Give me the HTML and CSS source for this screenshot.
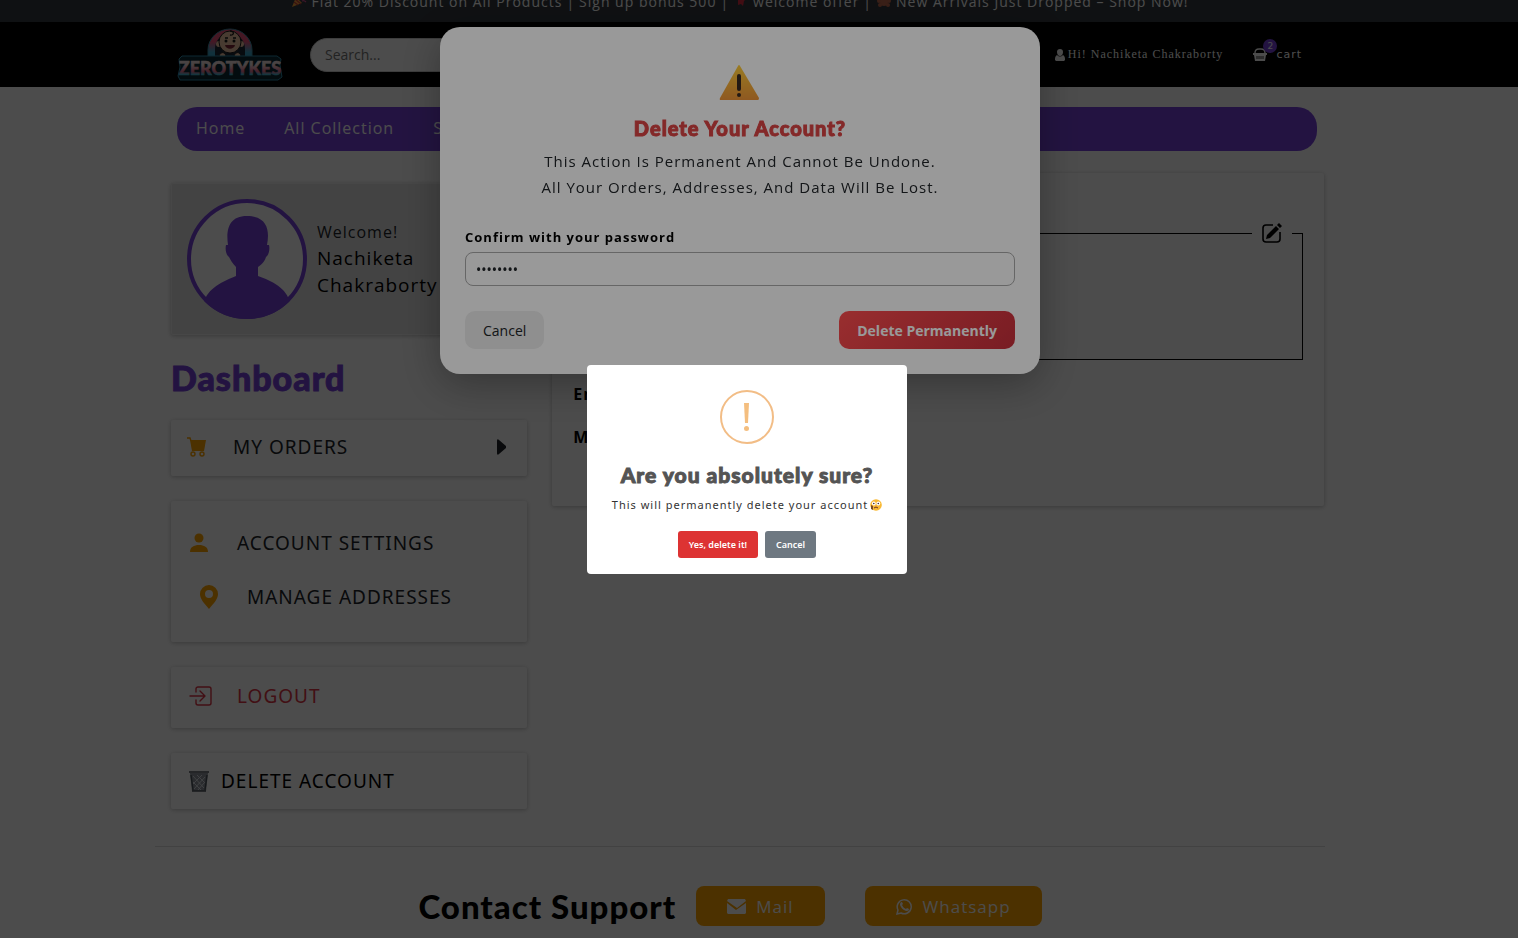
FILE: index.html
```html
<!DOCTYPE html>
<html lang="en">
<head>
  <meta charset="UTF-8">
  <meta name="viewport" content="width=device-width, initial-scale=1.0">
  <title>Zerotykes - My Account</title>
  <link rel="stylesheet" href="styles.css">
</head>
<body>

  <!-- Offer strip -->
  <div class="offer-bar">
    <svg class="emoji" viewBox="0 0 16 16"><path d="M1 15 5 5l6 6z" fill="#f5a33b"/><path d="M3 10l4 3M4 7l6 5" stroke="#c4413a" stroke-width="1.4"/><path d="M7 5c1-2 0-3-1-4M10 7c1-3 3-3 5-3M11 9c2-1 3 0 4 1" stroke="#d34b8d" stroke-width="1.3" fill="none"/><circle cx="11" cy="2" r="1" fill="#4aa3df"/></svg>
    <span>Flat 20% Discount on All Products</span><span>|</span>
    <span>Sign up bonus 500</span><span>|</span>
    <svg class="emoji" viewBox="0 0 16 16"><path d="M8 0l2 5 4 1-3 3-1 5-2-2-3 1V8L2 6l4-1z" fill="#dd2e44"/></svg>
    <span>welcome offer</span><span>|</span>
    <svg class="emoji" viewBox="0 0 16 16"><g fill="#c1694f"><circle cx="4" cy="3" r="2"/><circle cx="12" cy="3" r="2"/><circle cx="8" cy="5" r="4"/><ellipse cx="8" cy="10" rx="4" ry="4"/><circle cx="3" cy="9" r="2"/><circle cx="13" cy="9" r="2"/><circle cx="4" cy="13" r="2"/><circle cx="12" cy="13" r="2"/></g><circle cx="8" cy="6" r="1.5" fill="#e8b88a"/></svg>
    <span>New Arrivals Just Dropped – Shop Now!</span>
  </div>

  <header class="site-header">
    <div class="header-inner">
      <a class="logo" href="#" aria-label="Zerotykes">
        <svg width="106" height="54" viewBox="0 0 106 54">
          <defs>
            <linearGradient id="arch" x1="0" y1="0" x2="0" y2="1">
              <stop offset="0.4" stop-color="#e8517a"/><stop offset="0.75" stop-color="#3aa6c9"/>
            </linearGradient>
            <linearGradient id="word" x1="0" y1="0" x2="0" y2="1">
              <stop offset="0.35" stop-color="#f6e3e0"/><stop offset="0.65" stop-color="#ea6f92"/><stop offset="0.8" stop-color="#45b4d0"/>
            </linearGradient>
          </defs>
          <path d="M31 32V22a22 21 0 0 1 44 0v10z" fill="url(#arch)" stroke="#3d8ca5" stroke-width="1"/>
          <path d="M38 32V21a15 16 0 0 1 30 0v11z" fill="#1a2733"/>
          <circle cx="42" cy="16" r="3" fill="#f3c6a5"/><circle cx="64" cy="16" r="3" fill="#f3c6a5"/>
          <circle cx="53" cy="14" r="11" fill="#f3c6a5" stroke="#1a1a1a"/>
          <path d="M53 3c5 0 4 5 0 4M48 10h3M56 10h3" stroke="#1a1a1a" stroke-width="1.3" fill="none"/>
          <circle cx="49" cy="13" r="1.5" fill="#1a1a1a"/><circle cx="57" cy="13" r="1.5" fill="#1a1a1a"/>
          <path d="M48 17h10c-1 5-9 5-10 0z" fill="#7d2434"/>
          <path d="M42 28c2-5 6-4 7 0M57 28c2-5 6-4 7 0" fill="#f3c6a5" stroke="#1a1a1a"/>
          <path d="M5 28h95l4 3-1 6 2 12-4 3H3l-2-4 2-9-1-8z" fill="#0c2833" stroke="#2d8aa8" stroke-width="1"/>
          <text class="logo-word" x="53" y="47" text-anchor="middle" fill="url(#word)" stroke="url(#word)" stroke-width="0.6">ZEROTYKES</text>
        </svg>
      </a>
      <input class="search" type="search" placeholder="Search..." aria-label="Search">
      <div class="header-links">
        <a class="user-link" href="#">
          <svg width="10" height="12" viewBox="0 0 10 12" fill="#fff"><path d="M5 0a3 3 0 0 1 3 3c0 2-1 4-3 4S2 5 2 3a3 3 0 0 1 3-3zM2 6c2 2 4 2 6 0 2 1 2 3 2 5l-1 1H1l-1-1c0-2 0-4 2-5z"/></svg>
          Hi! Nachiketa Chakraborty
        </a>
        <a class="cart-link" href="#">
          <svg width="14" height="13" viewBox="0 0 14 13"><path d="M2 5c0-3 2-4 4-4h2c2 0 4 1 4 4" fill="none" stroke="#fff" stroke-width="1.4"/><path d="M0 5h14v2h-1l-1 6H2L1 7H0z" fill="#fff"/><path d="M4 8v3M6 8v3M8 8v3M10 8v3" stroke="#000" stroke-width="0.8"/></svg>
          <span class="badge">2</span>
          cart
        </a>
      </div>
    </div>
  </header>

  <nav class="main-nav">
    <a href="#">Home</a>
    <a href="#">All Collection</a>
    <a href="#">Shop</a>
  </nav>

  <main class="account">
    <div class="account-grid">
      <aside class="sidebar">
        <div class="profile">
          <svg class="avatar" viewBox="0 0 120 120">
            <defs><clipPath id="round"><circle cx="60" cy="60" r="60"/></clipPath></defs>
            <circle cx="60" cy="60" r="58" fill="#fff" stroke="#7743db" stroke-width="4"/>
            <path clip-path="url(#round)" fill="#7743db" d="M17 104c3-15 20-22 32-27V68c-4-4-6-8-7-10-3-2-4-8-3-12h2c-2-14 0-29 19-29 20 0 23 14 20 29h2c1 4 0 10-3 12-1 3-3 7-8 10v9c14 5 29 12 32 27l-20 16H37z"/>
          </svg>
          <div class="profile-text">
            <span class="welcome">Welcome!</span>
            <span class="name">Nachiketa Chakraborty</span>
          </div>
        </div>

        <h1 class="dashboard-title">Dashboard</h1>

        <div class="panel">
          <a class="menu-link orders" href="#">
            <svg width="20" height="20" viewBox="0 0 20 20"><path d="M0 1h3l1 3" fill="none" stroke="#ffa500" stroke-width="1.4"/><path d="M3 3h16l-2 11H5z" fill="#ffa500"/><g fill="none" stroke="#ffa500" stroke-width="1.4"><circle cx="6" cy="17" r="2"/><circle cx="15" cy="17" r="2"/></g></svg>
            My Orders
            <svg class="arrow" width="10" height="16" viewBox="0 0 10 16"><path d="M0 2C0 0 1 0 2 1l7 6v2l-7 6c-1 1-2 1-2-1z" fill="#212529"/></svg>
          </a>
        </div>
        <div class="panel settings">
          <a class="menu-link" href="#">
            <svg width="20" height="20" viewBox="0 0 20 20" fill="#ffa500"><circle cx="10" cy="5" r="4.5"/><path d="M1 19c0-5 4-7 9-7s9 2 9 7z"/></svg>
            Account Settings
          </a>
          <a class="menu-link nested" href="#">
            <svg width="20" height="26" viewBox="0 0 20 26"><path fill="#ffa500" fill-rule="evenodd" d="M10 1a9 9 0 0 1 9 9c0 5-4 9-9 15C5 19 1 15 1 10a9 9 0 0 1 9-9zm0 5a4 4 0 1 0 0 8 4 4 0 0 0 0-8z"/></svg>
            Manage Addresses
          </a>
        </div>
        <div class="panel logout">
          <a class="menu-link" href="#">
            <svg width="24" height="20" viewBox="0 0 24 20" fill="none" stroke="#dc3545" stroke-width="1.4" stroke-linecap="round" stroke-linejoin="round"><path d="M7 6V3a2 2 0 0 1 2-2h11a2 2 0 0 1 2 2v14a2 2 0 0 1-2 2H9a2 2 0 0 1-2-2v-3M1 10h14M11 5l5 5-5 5"/></svg>
            Logout
          </a>
        </div>
        <div class="panel">
          <button class="menu-link delete" type="button">
            <svg width="20" height="21" viewBox="0 0 20 21"><path d="M1 2h18l-2 18H3z" fill="#8d939b"/><path d="M0 1h20M3 20h14M2 4l2 15M18 4l-2 15" stroke="#4c535b" stroke-width="1.4" fill="none"/><path d="M4 5l11 12M8 4l8 8M13 4l-9 9M16 6l-11 12M15 12l-6 7M4 11l8 8" stroke="#dfe3e8" stroke-width="0.9"/></svg>
            Delete Account
          </button>
        </div>
      </aside>

      <section class="details">
        <fieldset>
          <legend>
            <button type="button" aria-label="Edit">
              <svg width="20" height="20" viewBox="0 0 20 20"><path d="M11 2H4a3 3 0 0 0-3 3v11a3 3 0 0 0 3 3h11a3 3 0 0 0 3-3V9" fill="none" stroke="#000" stroke-width="1.6"/><path d="M4 16l1-4L14 3l3 3-9 9zM15 2l2-2 3 3-2 2z"/></svg>
            </button>
          </legend>
        </fieldset>
        <p>Email</p>
        <p>Mobile</p>
      </section>
    </div>

    <footer class="support">
      <h2>Contact Support</h2>
      <a class="support-btn" href="#">
        <svg width="19" height="15" viewBox="0 0 19 15"><path d="M1 0h17l1 2-9 7L0 2zM0 4l9 7 10-7v10l-1 1H1l-1-1z" fill="#fff"/></svg>
        Mail
      </a>
      <a class="support-btn" href="#">
        <svg width="17" height="17" viewBox="0 0 17 17"><path d="M1 16l1-4a7 7 0 1 1 3 3z" fill="none" stroke="#fff" stroke-width="1.5"/><path d="M6 4l1 2-1 1c1 2 2 3 4 4l1-1 2 1c0 2-2 2-3 2-3-1-5-3-6-6 0-1 0-3 2-3z" fill="#fff"/></svg>
        Whatsapp
      </a>
    </footer>
  </main>

  <!-- Delete account modal -->
  <div class="modal-overlay">
    <form class="modal" role="dialog" aria-labelledby="modal-title">
      <svg class="warning" width="42" height="38" viewBox="0 0 42 38">
        <defs><linearGradient id="warn" x1="0" y1="0" x2="0" y2="1"><stop offset="0" stop-color="#ffce3a"/><stop offset="1" stop-color="#ee9437"/></linearGradient></defs>
        <path d="M19 2q1-2 2 0l19 32q0 2-1 2H2q-2 0-1-2z" fill="url(#warn)"/>
        <rect x="18" y="10" width="4" height="17" rx="2" fill="#3a2a20"/><circle cx="20" cy="31" r="2" fill="#3a2a20"/>
      </svg>
      <h2 id="modal-title">Delete Your Account?</h2>
      <p>This Action Is Permanent And Cannot Be Undone.<br>All Your Orders, Addresses, And Data Will Be Lost.</p>
      <label for="password">Confirm with your password</label>
      <input type="password" id="password" value="password">
      <div class="modal-actions">
        <button class="cancel-btn" type="button">Cancel</button>
        <button class="delete-btn" type="button">Delete Permanently</button>
      </div>
    </form>
  </div>

  <!-- Final confirmation -->
  <div class="alert-overlay">
    <div class="alert" role="alertdialog" aria-labelledby="alert-title">
      <svg class="alert-icon" width="54" height="54" viewBox="0 0 54 54">
        <circle cx="27" cy="27" r="26" fill="none" stroke="#f2bd86" stroke-width="2"/>
        <path d="M24 13h5l-1 20h-3z" fill="#f4be7f"/><circle cx="26.5" cy="38.5" r="2.5" fill="#f4be7f"/>
      </svg>
      <h2 id="alert-title">Are you absolutely sure?</h2>
      <p>This will permanently delete your account
        <svg width="12" height="12" viewBox="0 0 12 12"><circle cx="6" cy="6" r="5.8" fill="#f9b934"/><circle cx="3.8" cy="4.5" r="1.9" fill="#fff"/><circle cx="8.3" cy="4.5" r="1.9" fill="#fff"/><circle cx="3.8" cy="4.5" r="0.8" fill="#402a32"/><circle cx="8.3" cy="4.5" r="0.8" fill="#402a32"/><path d="M4 9q2-2 4 0" stroke="#6b3020" fill="none"/><path d="M1 6l2 1v4L1 10z" fill="#7a4a22"/></svg>
      </p>
      <div class="alert-actions">
        <button class="confirm" type="button">Yes, delete it!</button>
        <button type="button">Cancel</button>
      </div>
    </div>
  </div>

</body>
</html>
```
FILE: styles.css
```css
* {
  box-sizing: border-box;
}

body {
  margin: 0;
  font-family: "Open Sans", "Noto Sans", sans-serif;
  font-size: 16px;
  letter-spacing: 1px;
  color: #212529;
  background: #fff;
  height: 100vh;
  overflow: hidden;
}

a {
  color: inherit;
  text-decoration: none;
}

svg {
  flex-shrink: 0;
}

h1, h2 {
  margin: 0;
  font-family: Lato, "Noto Sans", sans-serif;
  font-weight: 900;
}

button {
  font-family: inherit;
  border: none;
  cursor: pointer;
}

/* Offer strip */
.offer-bar {
  display: flex;
  justify-content: center;
  gap: 4px;
  height: 22px;
  padding-right: 38px;
  background: #343a40;
  color: #fff;
  font-size: 14px;
  line-height: 4px;
  white-space: nowrap;
}

.emoji {
  width: 16px;
  height: 16px;
  margin-top: -8px;
}

/* Header */
.site-header {
  background: #000;
  padding-right: 24px;
}

.header-inner {
  display: flex;
  align-items: center;
  max-width: 1140px;
  height: 65px;
  margin: 0 auto;
  padding-right: 15px;
}

.logo {
  display: flex;
  margin-right: 27px;
}

.logo-word {
  font: 900 18px Lato, sans-serif;
  letter-spacing: 0;
}

.search {
  width: 400px;
  height: 34px;
  padding: 0 14px;
  border: 1px solid #ccc;
  border-radius: 17px;
  background: #fff;
  font: 14px "Open Sans", sans-serif;
}

.header-links {
  display: flex;
  align-items: center;
  gap: 30px;
  margin-left: auto;
  color: #fff;
  font-size: 12px;
}

.user-link,
.cart-link {
  display: flex;
  align-items: center;
  gap: 3px;
}

.user-link {
  font-family: "Liberation Serif", serif;
}

.cart-link {
  position: relative;
  gap: 9px;
  font-family: "DejaVu Sans", sans-serif;
  font-size: 11px;
}

.badge {
  position: absolute;
  top: -9px;
  left: 10px;
  width: 14px;
  height: 14px;
  border-radius: 50%;
  background: #7743db;
  font-size: 9px;
  line-height: 14px;
  text-align: center;
  letter-spacing: 0;
}

.main-nav {
  display: flex;
  align-items: center;
  gap: 39px;
  height: 44px;
  width: calc(100% - 24px);
  max-width: 1140px;
  margin: 20px auto 0;
  padding: 0 19px 2px;
  border-radius: 20px;
  background: #7743db;
  color: #fff;
  position: relative;
  left: -12px;
}

/* Account page */
.account {
  padding-right: 38px;
}

.account-grid {
  display: grid;
  grid-template-columns: 6fr 13fr;
  align-items: start;
  gap: 25px;
  max-width: 1170px;
  margin: 0 auto;
  padding: 22px 1px 0 16px;
}

.sidebar {
  display: flex;
  flex-direction: column;
  gap: 25px;
  padding-top: 10px;
}

.profile,
.panel,
.details {
  border-radius: 2px;
  box-shadow: 0 1px 4px rgba(0, 0, 0, 0.25);
}

.profile {
  display: flex;
  align-items: center;
  gap: 10px;
  padding: 15px;
  border: 1px solid #eee;
  background: #e3e3e3;
}

.avatar {
  width: 120px;
  height: 120px;
}

.profile-text {
  line-height: 26px;
}

.welcome {
  display: block;
}

.name {
  font-size: 19px;
  color: #000;
}

.dashboard-title {
  font-size: 34px;
  line-height: 35px;
  color: #7743db;
  -webkit-text-stroke: 1px #7743db;
}

.menu-link {
  display: flex;
  align-items: center;
  width: 100%;
  height: 56px;
  padding: 0 18px;
  gap: 28px;
  background: none;
  font-family: "Noto Sans", sans-serif;
  font-size: 19px;
  letter-spacing: 1px;
  text-transform: uppercase;
  color: #212529;
}

.orders {
  padding: 0 20px 2px 16px;
  gap: 26px;
}

.arrow {
  margin-left: auto;
}

.settings {
  padding: 15px 0 18px;
}

.settings .menu-link {
  height: 54px;
}

.settings .nested {
  padding-left: 28px;
}

.logout {
  padding: 1px 0 4px;
}

.logout .menu-link {
  gap: 24px;
  color: #dc3545;
}

.delete {
  gap: 12px;
  color: #000;
}

.details {
  min-height: 333px;
  padding: 40px 21px 20px;
  color: #000;
  font-weight: bold;
}

.details fieldset {
  height: 147px;
  margin: 0 0 22px;
  padding: 0 10px;
  border: 1px solid #000;
}

.details legend {
  height: 40px;
  margin-left: auto;
  padding: 0;
}

.details legend button {
  display: grid;
  place-items: center;
  width: 40px;
  height: 40px;
  padding: 0;
  background: none;
}

.details p {
  margin: 0 0 19px;
  line-height: 24px;
}

.support {
  display: flex;
  align-items: center;
  justify-content: center;
  gap: 40px;
  max-width: 1170px;
  margin: 37px auto 0;
  padding: 39px 20px 20px 0;
  border-top: 1px solid #ddd;
}

.support h2 {
  margin-right: -20px;
  font-size: 33px;
  line-height: 38px;
  color: #000;
}

.support-btn {
  display: flex;
  align-items: center;
  gap: 10px;
  height: 40px;
  padding: 0 31px;
  border-radius: 8px;
  background: #ffa500;
  color: #fff;
  font-size: 17px;
}

/* Delete modal */
.modal-overlay,
.alert-overlay {
  position: fixed;
  inset: 0;
  display: flex;
  justify-content: center;
}

.modal-overlay {
  align-items: flex-start;
  padding: 27px 38px 0 0;
  background: rgba(0, 0, 0, 0.5);
}

.modal {
  display: flex;
  flex-direction: column;
  width: 600px;
  padding: 37px 25px 25px;
  border-radius: 20px;
  background: #fff;
  box-shadow: 0 10px 40px rgba(0, 0, 0, 0.3);
}

.warning {
  align-self: center;
}

.modal h2 {
  margin-top: 13px;
  font-size: 20px;
  line-height: 26px;
  text-align: center;
  color: #dc4545;
  -webkit-text-stroke: 1px #dc4545;
}

.modal p {
  margin: 7px 0 27px;
  font-size: 15px;
  line-height: 26px;
  text-align: center;
  color: #212529;
}

.modal label {
  margin-bottom: 5px;
  font-size: 13px;
  font-weight: bold;
  line-height: 20px;
  color: #000;
}

.modal input {
  height: 34px;
  padding: 0 10px;
  border: 1px solid #aaa;
  border-radius: 8px;
  font: 14px "Noto Sans", sans-serif;
  color: #212529;
}

.modal-actions {
  display: flex;
  justify-content: space-between;
  margin-top: 25px;
}

.modal-actions button {
  height: 38px;
  padding: 0 18px;
  border-radius: 10px;
  font-size: 14px;
}

.cancel-btn {
  background: #eee;
  color: #212529;
}

.modal-actions .delete-btn {
  background: linear-gradient(135deg, #ff4d4f, #c9303c);
  color: #fff;
  font-weight: bold;
}

/* Confirmation alert */
.alert-overlay {
  align-items: center;
  padding-right: 24px;
  background: rgba(0, 0, 0, 0.4);
}

.alert {
  width: 320px;
  padding: 25px 10px 16px;
  border-radius: 4px;
  background: #fff;
  text-align: center;
}

.alert-icon {
  display: block;
  margin: 0 auto;
}

.alert h2 {
  margin-top: 18px;
  font-size: 21px;
  line-height: 26px;
  color: #545454;
  -webkit-text-stroke: 1px #545454;
}

.alert p {
  display: flex;
  align-items: center;
  justify-content: center;
  gap: 2px;
  margin: 8px 0 17px;
  font-family: "Noto Sans", sans-serif;
  font-size: 11px;
  line-height: 18px;
  color: #333;
  white-space: nowrap;
}

.alert-actions {
  display: flex;
  justify-content: center;
  gap: 7px;
}

.alert-actions button {
  height: 27px;
  padding: 0 11px;
  border-radius: 3px;
  background: #6e7881;
  color: #fff;
  font-family: "Noto Sans", sans-serif;
  font-size: 9px;
  font-weight: 600;
}

.alert-actions .confirm {
  background: #dd3333;
}
```
